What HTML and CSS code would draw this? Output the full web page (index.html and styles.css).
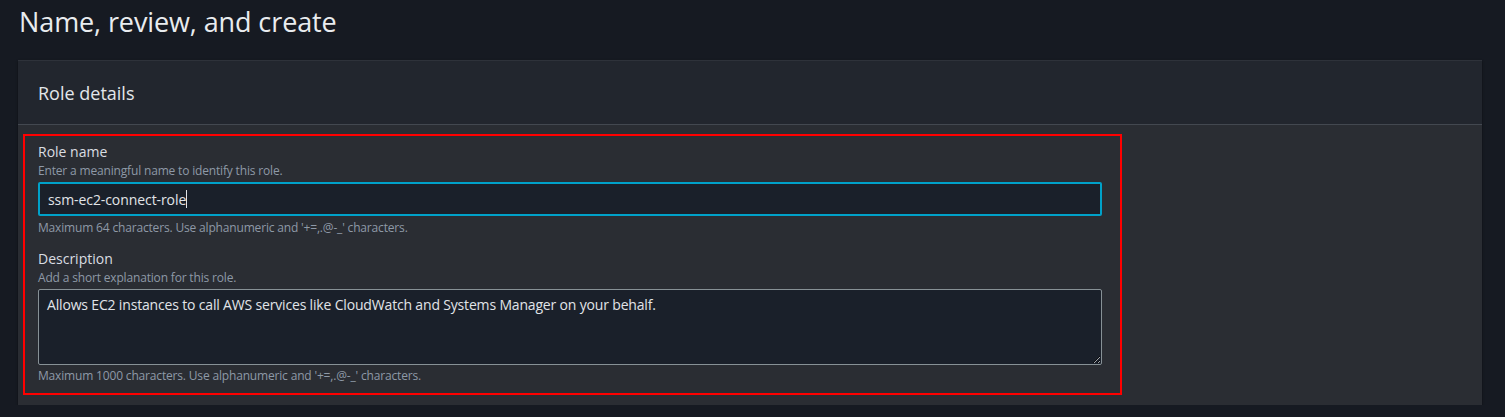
FILE: index.html
```html
<!DOCTYPE html>
<html lang="en">
<head>
<meta charset="utf-8">
<title>Name, review, and create</title>
<link rel="stylesheet" href="styles.css">
</head>
<body>
<main class="page">
  <h1 class="page-title">Name, review, and create</h1>
  <section class="container">
    <header class="container-header">
      <h2 class="container-title">Role details</h2>
    </header>
    <div class="container-body">
      <div class="highlight">
        <div class="field">
          <div class="field-label">Role name</div>
          <div class="field-hint">Enter a meaningful name to identify this role.</div>
          <div class="text-input"><span class="value">ssm-ec2-connect-role</span><span class="caret"></span></div>
          <div class="field-constraint">Maximum 64 characters. Use alphanumeric and '+=,.@-_' characters.</div>
        </div>
        <div class="field field-second">
          <div class="field-label">Description</div>
          <div class="field-hint">Add a short explanation for this role.</div>
          <textarea class="text-area" readonly>Allows EC2 instances to call AWS services like CloudWatch and Systems Manager on your behalf.</textarea>
          <div class="field-constraint">Maximum 1000 characters. Use alphanumeric and '+=,.@-_' characters.</div>
        </div>
      </div>
    </div>
  </section>
</main>
</body>
</html>
```

FILE: styles.css
```css
html, body {
  margin: 0;
  padding: 0;
}
body {
  background: #161a22;
  font-family: "Open Sans", "Noto Sans", sans-serif;
  color: #d5d9de;
}
.page {
  padding: 0 23px 0 18px;
}
.page-title {
  margin: 0;
  padding: 0 0 0 1px;
  height: 60px;
  font-size: 27px;
  line-height: 44px;
  font-weight: 400;
  color: #e9ecef;
  letter-spacing: -0.1px;
}
.container {
  background: #2a2d33;
  box-shadow: 0 1px 2px rgba(0,0,0,0.5);
  border-top: 1px solid #2e323a;
}
.container-header {
  background: #22262e;
  border-bottom: 1px solid #434850;
  height: 63px;
  display: flex;
  align-items: center;
  padding-left: 20px;
}
.container-title {
  margin: 0;
  font-size: 18px;
  font-weight: 400;
  color: #e3e6ea;
  line-height: 24px;
  padding-top: 1px;
}
.container-body {
  padding: 9px 360px 10px 5px;
}
.highlight {
  border: 2px solid #ff0000;
  padding: 6px 18px 9px 13px;
}
.field-second {
  margin-top: 13px;
}
.field-label {
  font-size: 14px;
  line-height: 20px;
  color: #dadde2;
}
.field-hint, .field-constraint {
  font-size: 12px;
  line-height: 16px;
  color: #8e99a7;
  letter-spacing: -0.17px;
}
.field-hint {
  padding-top: 1px;
}
.text-input {
  margin-top: 3px;
  height: 30px;
  border: 2px solid #00a1c9;
  border-radius: 2px;
  background: #1a202a;
  display: flex;
  align-items: center;
  padding-left: 8px;
  font-size: 14px;
  color: #e1e4e8;
  letter-spacing: -0.08px;
}
.caret {
  display: inline-block;
  width: 1px;
  height: 18px;
  background: #e1e4e8;
  margin-left: 0;
}
.field .field-constraint {
  margin-top: 4px;
}
.text-area {
  display: block;
  box-sizing: border-box;
  width: 100%;
  margin: 3px 0 0 0;
  height: 76px;
  border: 1px solid #879196;
  border-radius: 2px;
  background: #1a202a;
  color: #e1e4e8;
  font-family: "Open Sans", "Noto Sans", sans-serif;
  font-size: 14px;
  line-height: 20px;
  letter-spacing: -0.17px;
  padding: 5px 8px;
  resize: vertical;
  outline: none;
  color-scheme: dark;
}
.field-second .field-constraint {
  margin-top: 3px;
}
```
